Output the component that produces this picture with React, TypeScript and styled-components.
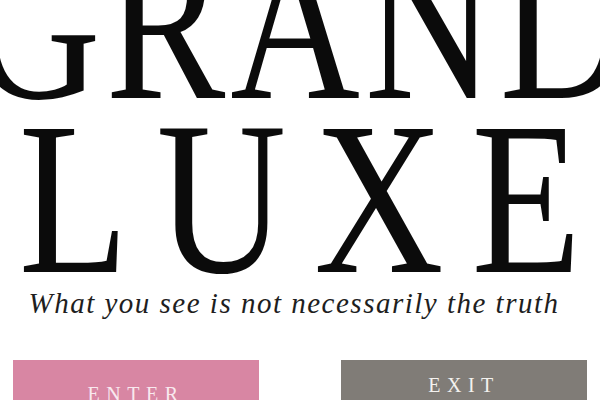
import * as React from 'react'
import styled, { createGlobalStyle } from 'styled-components'

const GlobalStyle = createGlobalStyle`
  html, body {
    margin: 0;
    padding: 0;
    background: #ffffff;
  }
  body {
    font-family: "Liberation Serif", "Times New Roman", serif;
  }
`

const Page = styled.div`
  width: 600px;
  height: 400px;
  overflow: hidden;
  background: #ffffff;
  display: flex;
  flex-direction: column;
`

// big display words, condensed a bit so Times gets closer to the didone in the mock
const Word = styled.div<{ $spacing: number; $offset?: number }>`
  display: flex;
  justify-content: center;
  white-space: nowrap;
  font-family: "Liberation Serif", "Times New Roman", serif;
  font-size: 219px;
  line-height: 174px;
  height: 174px;
  color: #0b0b0b;
  letter-spacing: ${(p) => p.$spacing}px;
  padding-left: ${(p) => p.$spacing}px;
  margin-top: ${(p) => p.$offset ?? 0}px;
  transform: scaleX(0.82);
`

const Tagline = styled.p`
  margin: -3px 0 0;
  padding-right: 12px;
  text-align: center;
  font-family: "Liberation Serif", "Times New Roman", serif;
  font-style: italic;
  font-size: 29px;
  line-height: 42px;
  letter-spacing: 1.5px;
  color: #1e1e1e;
  white-space: nowrap;
`

const ButtonRow = styled.div`
  display: flex;
  justify-content: space-between;
  align-items: flex-start;
  padding: 0 13px;
  margin-top: 36px;
`

const Button = styled.button<{ $bg: string; $fg: string; $height: number }>`
  width: 246px;
  height: ${(p) => p.$height}px;
  border: none;
  border-radius: 0;
  background: ${(p) => p.$bg};
  color: ${(p) => p.$fg};
  font-family: "Liberation Serif", "Times New Roman", serif;
  font-size: 20px;
  letter-spacing: 6.5px;
  display: flex;
  align-items: center;
  justify-content: center;
  cursor: pointer;
  padding: 0;
`

export default function App() {
  return (
    <>
      <GlobalStyle />
      <Page>
        <Word $spacing={6} $offset={-63}>GRAND</Word>
        <Word $spacing={34}>LUXE</Word>
        <Tagline>What you see is not necessarily the truth</Tagline>
        <ButtonRow>
          <Button $bg="#d886a3" $fg="#f8e9ef" $height={68}>ENTER</Button>
          <Button $bg="#807c77" $fg="#f4f2ef" $height={50}>EXIT</Button>
        </ButtonRow>
      </Page>
    </>
  )
}
